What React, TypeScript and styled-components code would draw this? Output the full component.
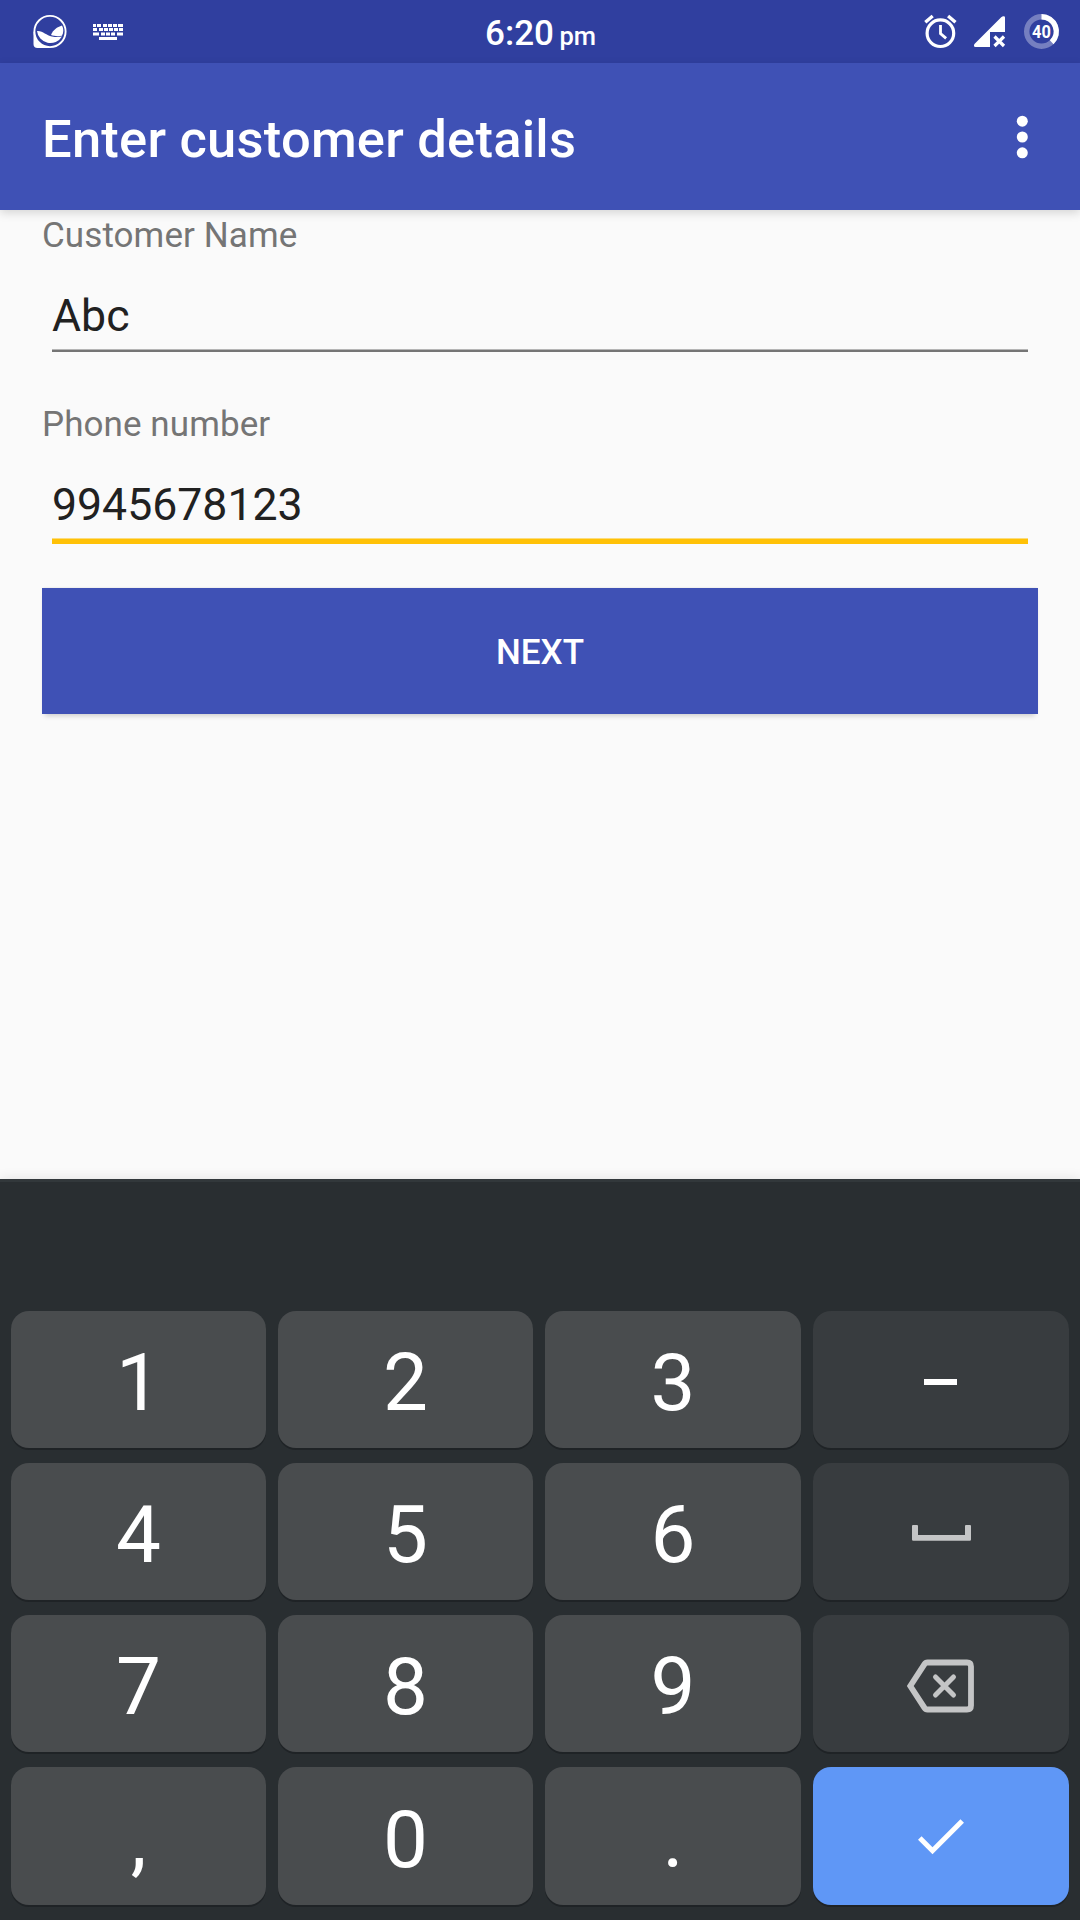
import React from "react";
import styled, { createGlobalStyle } from "styled-components";

const Global = createGlobalStyle`
  * { box-sizing: border-box; }
  html, body { margin: 0; padding: 0; }
  body { background: #fafafa; font-family: Roboto, "Liberation Sans", sans-serif; }
`;

const Screen = styled.div`
  width: 1080px;
  height: 1920px;
  display: flex;
  flex-direction: column;
  background: #fafafa;
  overflow: hidden;
`;

const StatusBar = styled.header`
  height: 63px;
  flex: none;
  display: grid;
  grid-template-columns: 1fr auto 1fr;
  align-items: start;
  background: #303f9f;
  color: #fff;
`;

const StatusIcons = styled.div<{ $end?: boolean }>`
  display: flex;
  height: 63px;
  justify-content: ${(p) => (p.$end ? "flex-end" : "flex-start")};
  svg { display: block; flex: none; }
`;

const Clock = styled.div`
  display: flex;
  align-items: baseline;
  gap: 5.5px;
  font-size: 35px;
  font-weight: 500;
  line-height: 43px;
  padding: 12px 0 0 1px;
`;

const Meridiem = styled.span`
  font-size: 25.5px;
`;

const AppBar = styled.div`
  height: 147px;
  flex: none;
  display: flex;
  align-items: center;
  justify-content: space-between;
  padding: 4px 42px 0;
  background: #3f51b5;
  color: #fff;
  box-shadow: 0 3px 9px rgba(0, 0, 0, 0.15);
`;

const Title = styled.h1`
  margin: 0;
  font-size: 52.5px;
  font-weight: 500;
  line-height: 62px;
  letter-spacing: 0.23px;
`;

const MenuButton = styled.button`
  display: flex;
  padding: 0;
  margin: 0 10px 4px 0;
  border: 0;
  background: none;
`;

const Form = styled.main`
  flex: 1;
  display: flex;
  flex-direction: column;
  padding: 5px 42px 0;
`;

const Field = styled.div`
  display: flex;
  flex-direction: column;
  height: 189px;
`;

const Label = styled.label`
  font-size: 35px;
  line-height: 42px;
  letter-spacing: 0.08px;
  color: #757575;
`;

const Value = styled.div<{ $focused?: boolean }>`
  margin: 32px 10px 0;
  height: ${(p) => (p.$focused ? 66 : 63)}px;
  padding-top: 1px;
  border-bottom: ${(p) => (p.$focused ? "5px solid #ffc107" : "2px solid #757575")};
  box-shadow: inset 0 -1px 0 ${(p) => (p.$focused ? "#fcdc7c" : "#b5b5b5")};
  font-size: 44.6px;
  line-height: 52px;
  color: #212121;
`;

const NextButton = styled.button`
  height: 126px;
  margin-top: -5px;
  padding: 4px 0 0;
  border: 0;
  background: #3f51b5;
  color: #fff;
  font: 500 35px/42px Roboto, "Liberation Sans", sans-serif;
  box-shadow: 0 5px 5px -3px rgba(0, 0, 0, 0.18), 0 -1px 2px -1px rgba(0, 0, 0, 0.12);
`;

const Keyboard = styled.section`
  height: 741px;
  flex: none;
  padding: 129px 11px 0;
  border-top: 3px solid #32383b;
  background: #292e31;
  box-shadow: 0 0 12px rgba(0, 0, 0, 0.1);
`;

const Keys = styled.div`
  display: grid;
  grid-template-columns: 255px 255px 256px 256px;
  grid-template-rows: repeat(3, 137px) 138px;
  gap: 15px 12px;
`;

type Tone = "digit" | "side" | "enter";
const tones: Record<Tone, string> = {
  digit: "#494c4e",
  side: "#383c3f",
  enter: "#5f97f6",
};

const Key = styled.button<{ $tone: Tone }>`
  display: flex;
  align-items: center;
  justify-content: center;
  padding: ${(p) => (p.$tone === "digit" ? "7px 0 0" : "0")};
  border: 0;
  border-radius: 18px;
  background: ${(p) => tones[p.$tone]};
  color: #fff;
  font: 400 80px/94px Roboto, "Liberation Sans", sans-serif;
  box-shadow: 0 2px 0 #1f2326;
`;

const Glyph = styled.svg<{ $margin: string }>`
  display: block;
  flex: none;
  margin: ${(p) => p.$margin};
`;

const Messenger = () => (
  <svg width="67" height="63" viewBox="0 0 67 63">
    <path d="M33.5 31.5V44q0 4 4 4H50Z" fill="#fff" />
    <circle cx="50" cy="31.5" r="15.6" fill="#303f9f" stroke="#fff" strokeWidth="1.9" />
    <path d="M37 31c6-.5 9 4.500 15 5.500c4 .8 7.500.5 10 0a13.500 13.500 0 0 1-25-5.500Z" fill="#fff" />
    <path d="M51 35c2-5 6-8 11-9.500c2 3.500 1.500 7 0 10.300c-4 .7-8 .4-11-.8Z" fill="#fff" />
  </svg>
);

const keyRows = [
  { y: 24, x: [93, 97, 103, 108, 113, 118], w: [3, 4, 4, 4, 4, 5] },
  { y: 28, x: [93, 99, 104, 109, 114, 119], w: [4, 4, 4, 4, 4, 4] },
  { y: 32.5, x: [93, 101, 106, 111, 117], w: [6, 4, 4, 4, 6] },
];

const KeyboardIcon = () => (
  <svg width="60" height="63" viewBox="67 0 60 63" fill="#fff">
    {keyRows.map((r) =>
      r.x.map((x, i) => <rect key={x} x={x} y={r.y} width={r.w[i]} height="3" />)
    )}
    <rect x="99" y="37" width="18" height="3" />
  </svg>
);

const SystemIcons = () => (
  <svg width="160" height="63" viewBox="920 0 160 63" fill="none">
    <g stroke="#fff">
      <circle cx="940.4" cy="33.2" r="13.3" strokeWidth="3.2" />
      <path d="M940.5 25v8.500l5.600 4.900" strokeWidth="2.8" />
      <path d="M925.3 22.200l7.400-6.200M955.500 22.200l-7.400-6.200" strokeWidth="3.4" />
    </g>
    <path d="M1005 17.500V32h-15v15h-14.500c-1.800 0-2-2-.8-3.300l26.500-26.500c1.300-1.200 3.800-1.500 3.800.3Z" fill="#fff" />
    <path d="M994.5 36.500l9.500 9.500m0-9.500l-9.500 9.500" stroke="#fff" strokeWidth="3.2" />
    <circle cx="1041.5" cy="31.5" r="14.8" stroke="#757fc0" strokeWidth="5.4" />
    <path d="M1041.5 16.700a14.800 14.800 0 0 1 10.200 25.500" stroke="#fff" strokeWidth="5.4" />
    <text
      x="1032.1"
      y="38"
      fill="#fff"
      fontFamily="Roboto"
      fontWeight="700"
      fontSize="18.4"
      textLength="18.8"
      lengthAdjust="spacingAndGlyphs"
    >
      40
    </text>
  </svg>
);

const Overflow = () => (
  <svg width="12" height="44" viewBox="0 0 12 44" fill="#fff">
    <circle cx="6.3" cy="6.2" r="5.5" />
    <circle cx="6.3" cy="22" r="5.5" />
    <circle cx="6.3" cy="37.8" r="5.5" />
  </svg>
);

const Minus = () => (
  <Glyph $margin="5px 1px 0 0" width="33" height="6" viewBox="0 0 33 6">
    <rect width="33" height="6" fill="#fff" />
  </Glyph>
);

const Space = () => (
  <Glyph $margin="3px 0 0 1px" width="59" height="16" viewBox="0 0 59 16">
    <path d="M1 0h4q1 0 1 1v9h47v-9q0-1 1-1h4q1 0 1 1v13.500q0 1.200-1.200 1.200h-56.600q-1.200 0-1.200-1.200v-13.500q0-1 1-1Z" fill="#c4c5c6" />
  </Glyph>
);

const Backspace = () => (
  <Glyph $margin="4px 0 0" width="68" height="54" viewBox="0 0 68 54" fill="none" stroke="#c4c5c6" strokeWidth="5.8">
    <path d="M20.5 3.500h39.500q4 0 4 4v39q0 4-4 4h-39.500q-2 0-3-1.600l-14.200-21.900l14.200-21.900q1-1.600 3-1.600Z" />
    <path d="M28.5 18l18 18m0-18l-18 18" strokeLinecap="round" strokeWidth="5" />
  </Glyph>
);

const Check = () => (
  <Glyph $margin="1px 0 0" width="48" height="38" viewBox="0 0 48 38" fill="none" stroke="#fff" strokeWidth="5">
    <path d="M2.8 20l12.700 12.700l29.700-29.700" />
  </Glyph>
);

const keys: { id: string; tone: Tone; face: React.ReactNode }[] = [
  { id: "1", tone: "digit", face: "1" },
  { id: "2", tone: "digit", face: "2" },
  { id: "3", tone: "digit", face: "3" },
  { id: "minus", tone: "side", face: <Minus /> },
  { id: "4", tone: "digit", face: "4" },
  { id: "5", tone: "digit", face: "5" },
  { id: "6", tone: "digit", face: "6" },
  { id: "space", tone: "side", face: <Space /> },
  { id: "7", tone: "digit", face: "7" },
  { id: "8", tone: "digit", face: "8" },
  { id: "9", tone: "digit", face: "9" },
  { id: "backspace", tone: "side", face: <Backspace /> },
  { id: "comma", tone: "digit", face: "," },
  { id: "0", tone: "digit", face: "0" },
  { id: "period", tone: "digit", face: "." },
  { id: "enter", tone: "enter", face: <Check /> },
];

export default function App() {
  return (
    <Screen>
      <Global />
      <StatusBar>
        <StatusIcons><Messenger /><KeyboardIcon /></StatusIcons>
        <Clock>6:20<Meridiem>pm</Meridiem></Clock>
        <StatusIcons $end><SystemIcons /></StatusIcons>
      </StatusBar>
      <AppBar>
        <Title>Enter customer details</Title>
        <MenuButton><Overflow /></MenuButton>
      </AppBar>
      <Form>
        <Field>
          <Label>Customer Name</Label>
          <Value>Abc</Value>
        </Field>
        <Field>
          <Label>Phone number</Label>
          <Value $focused>9945678123</Value>
        </Field>
        <NextButton>NEXT</NextButton>
      </Form>
      <Keyboard>
        <Keys>
          {keys.map((k) => <Key key={k.id} $tone={k.tone}>{k.face}</Key>)}
        </Keys>
      </Keyboard>
    </Screen>
  );
}
